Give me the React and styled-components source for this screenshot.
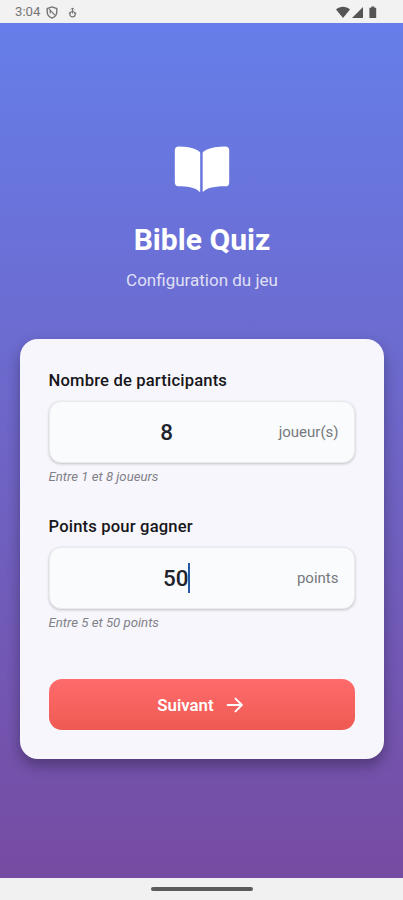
import React from "react";
import styled, { createGlobalStyle } from "styled-components";

const GlobalStyle = createGlobalStyle`
  *, *::before, *::after { box-sizing: border-box; }
  body { margin: 0; font-family: Roboto, "Liberation Sans", sans-serif; }
`;

const Screen = styled.div`
  display: flex;
  flex-direction: column;
  width: 403px;
  height: 900px;
  overflow: hidden;
  background: #f2f2f2;
`;

const StatusBar = styled.header`
  display: flex;
  align-items: center;
  justify-content: space-between;
  flex: none;
  height: 23px;
  padding: 1px 25px 0 15px;
  color: #757575;
`;

const StatusGroup = styled.div`
  display: flex;
  align-items: center;
  gap: 10px;
`;

const Clock = styled.span`
  font-size: 13.2px;
  line-height: 16px;
  margin-right: -4px;
`;

const Page = styled.main`
  display: flex;
  flex-direction: column;
  align-items: center;
  flex: 1;
  background: linear-gradient(180deg, #667eea 0%, #764ba2 100%);
`;

const Hero = styled.section`
  display: flex;
  flex-direction: column;
  align-items: center;
  height: 315.5px;
  padding: 118px 0 0 1px;
`;

const Title = styled.h1`
  margin: 21px 0 0;
  font-size: 30.1px;
  line-height: 40px;
  font-weight: 700;
  color: #fff;
`;

const Subtitle = styled.p`
  margin: 8px 0 0;
  font-size: 17px;
  line-height: 24px;
  color: rgba(255, 255, 255, 0.8);
`;

const Card = styled.form`
  width: 364px;
  height: 420.5px;
  padding: 29px;
  border-radius: 18px;
  background: #f7f6fc;
  box-shadow: 0 7px 14px rgba(0, 0, 0, 0.3);
`;

const Field = styled.div`
  display: flex;
  flex-direction: column;
  height: 146px;
`;

const Label = styled.label`
  padding-top: 1px;
  font-size: 16.6px;
  line-height: 24px;
  font-weight: 500;
  letter-spacing: 0.17px;
  color: #17171b;
`;

const InputBox = styled.div`
  display: flex;
  align-items: center;
  gap: 10px;
  flex: none;
  height: 62px;
  margin-top: 8px;
  padding: 1px 15px 0;
  border: 1px solid #e9eaee;
  border-radius: 12px;
  background: #f9fbfd;
  box-shadow: 0 1px 3px rgba(0, 0, 0, 0.22);
`;

const Value = styled.span`
  display: flex;
  align-items: center;
  justify-content: center;
  flex: 1;
  font-size: 22.4px;
  line-height: 30px;
  font-weight: 500;
  color: #20222c;
`;

const Caret = styled.i`
  width: 2px;
  height: 30px;
  margin-right: -2px;
  background: #2459a8;
`;

const Unit = styled.span`
  font-size: 15px;
  line-height: 20px;
  color: #77787c;
`;

const Hint = styled.p`
  margin: 5px 0 0;
  font-size: 13.2px;
  line-height: 18px;
  font-style: italic;
  color: #818188;
`;

const NextButton = styled.button`
  display: flex;
  align-items: center;
  justify-content: center;
  gap: 11px;
  width: 100%;
  height: 51px;
  margin-top: 19.5px;
  padding: 0 1px 0 0;
  border: 0;
  border-radius: 13px;
  background: linear-gradient(180deg, #ff6b6b, #ee5a52);
  color: #fff;
  font: 600 16.8px/24px Roboto, "Liberation Sans", sans-serif;
`;

const NavBar = styled.footer`
  display: flex;
  justify-content: center;
  flex: none;
  height: 22px;
  padding-top: 9px;
  background: #f1f1f1;
`;

const Handle = styled.div`
  width: 102px;
  height: 4px;
  border-radius: 2px;
  background: #5b5b5b;
`;

function ShieldIcon() {
  return (
    <svg width="12" height="13" viewBox="0 0 12 13" fill="none" stroke="currentColor">
      <path d="M6 .9 10.8 2.5V6c0 3-2 5-4.8 6.1C3.2 11 1.2 9 1.2 6V2.5Z" strokeWidth="1.4" />
      <path d="m3.1 3.2 5.8 6M4.2 7.5v-3" strokeWidth="1.2" />
    </svg>
  );
}

function TouchIcon() {
  return (
    <svg width="9" height="11" viewBox="0 0 9 11" fill="none" stroke="currentColor">
      <path d="M4.5 6.5V1M2.8 2.6 4.5.9l1.7 1.7" />
      <circle cx="4.5" cy="7.2" r="2.7" strokeWidth="1.2" />
      <path d="M.7 6.2h2M6.3 6.2h2" />
    </svg>
  );
}

function BookIcon() {
  return (
    <svg width="58" height="58" viewBox="0 0 512 512" fill="#fff">
      <path d="M202.24 74C166.11 56.75 115.61 48.3 48 48a31.36 31.36 0 0 0-17.92 5.33A32 32 0 0 0 16 79.9V366c0 19.34 13.76 33.93 32 33.93 71.07 0 142.36 6.64 185.06 47a4.11 4.11 0 0 0 6.94-3V106.82a15.89 15.89 0 0 0-5.46-12A143 143 0 0 0 202.24 74Z" />
      <path
        transform="translate(496 0) scale(1.045 1) translate(-496 0)"
        d="M481.92 53.3A31.33 31.33 0 0 0 464 48c-67.61.3-118.11 8.71-154.24 26a143.31 143.31 0 0 0-32.31 20.78 15.93 15.93 0 0 0-5.45 12v337.13a3.93 3.93 0 0 0 6.68 2.81c25.67-25.5 70.72-46.82 185.36-46.81a32 32 0 0 0 32-32v-288a32 32 0 0 0-14.12-26.61Z"
      />
    </svg>
  );
}

function ArrowIcon() {
  return (
    <svg width="20" height="20" viewBox="0 0 512 512" fill="none" stroke="currentColor" strokeWidth="50" strokeLinecap="round" strokeLinejoin="round">
      <path d="m268 92 164 164-164 164M410 256H68" />
    </svg>
  );
}

function SignalIcons() {
  return (
    <svg width="42" height="13" viewBox="0 0 42 13" fill="#555">
      <path d="M0 3.5C4-.2 10-.2 14 3.5L7 12Z" />
      <path d="M27 1v11H16Z" />
      <path d="M35.3.5h3v1.2h1.9V12h-6.8V1.7h1.9Z" />
    </svg>
  );
}

function NumberField({ label, value, unit, hint, focused }) {
  return (
    <Field>
      <Label>{label}</Label>
      <InputBox>
        <Value>
          {value}
          {focused && <Caret />}
        </Value>
        <Unit>{unit}</Unit>
      </InputBox>
      <Hint>{hint}</Hint>
    </Field>
  );
}

export default function App() {
  return (
    <Screen>
      <GlobalStyle />
      <StatusBar>
        <StatusGroup>
          <Clock>3:04</Clock>
          <ShieldIcon />
          <TouchIcon />
        </StatusGroup>
        <SignalIcons />
      </StatusBar>
      <Page>
        <Hero>
          <BookIcon />
          <Title>Bible Quiz</Title>
          <Subtitle>Configuration du jeu</Subtitle>
        </Hero>
        <Card>
          <NumberField label="Nombre de participants" value="8" unit="joueur(s)" hint="Entre 1 et 8 joueurs" />
          <NumberField label="Points pour gagner" value="50" unit="points" hint="Entre 5 et 50 points" focused />
          <NextButton type="button">
            Suivant
            <ArrowIcon />
          </NextButton>
        </Card>
      </Page>
      <NavBar>
        <Handle />
      </NavBar>
    </Screen>
  );
}
